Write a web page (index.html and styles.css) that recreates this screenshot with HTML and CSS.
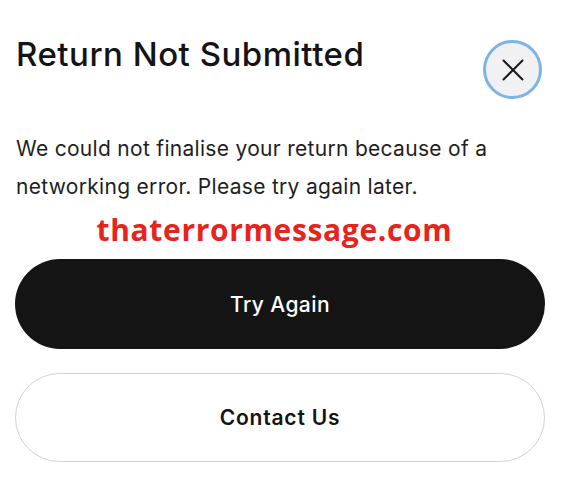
FILE: index.html
```html
<!DOCTYPE html>
<html lang="en">
<head>
<meta charset="utf-8">
<title>Return Not Submitted</title>
<link rel="stylesheet" href="styles.css">
</head>
<body>
<div class="dialog">
  <div class="header">
    <h1 class="title">Return Not Submitted</h1>
    <button class="close" aria-label="Close">
      <svg width="22" height="22" viewBox="0 0 22 22" aria-hidden="true">
        <path d="M1.5 1.5 L20.5 20.5 M20.5 1.5 L1.5 20.5" stroke="#1a1a1a" stroke-width="2" stroke-linecap="round" fill="none"/>
      </svg>
    </button>
  </div>
  <p class="message">We could not finalise your return because of a networking error. Please try again later.</p>
  <div class="watermark">thaterrormessage.com</div>
  <div class="actions">
    <button class="btn btn-primary">Try Again</button>
    <button class="btn btn-secondary">Contact Us</button>
  </div>
</div>
</body>
</html>
```

FILE: styles.css
```css
html, body {
  margin: 0;
  padding: 0;
  background: #ffffff;
}

body {
  font-family: "Inter", "Liberation Sans", Arial, sans-serif;
  color: #161616;
}

.dialog {
  width: 571px;
  box-sizing: border-box;
  padding: 34px 26px 0 15px;
}

.header {
  display: flex;
  justify-content: space-between;
  align-items: flex-start;
}

.title {
  margin: 0 0 0 1px;
  font-size: 33px;
  line-height: 40px;
  font-weight: 500;
  letter-spacing: 0.5px;
  color: #141414;
}

.close {
  margin: 6px 3px 0 0;
  width: 59px;
  height: 59px;
  box-sizing: border-box;
  border-radius: 50%;
  border: 3px solid #7db4e6;
  background: #f1f1f3;
  display: flex;
  align-items: center;
  justify-content: center;
  padding: 0;
}

.message {
  margin: 31px 0 0 1px;
  font-size: 21px;
  line-height: 38px;
  letter-spacing: 0.3px;
  color: #1e1e1e;
}

.watermark {
  margin-top: 6px;
  padding-right: 11px;
  text-align: center;
  font-family: "Open Sans", "Lato", sans-serif;
  font-weight: 700;
  font-size: 30px;
  line-height: 36px;
  letter-spacing: 0.65px;
  color: #e8231c;
}

.actions {
  margin-top: 11px;
  display: flex;
  flex-direction: column;
  gap: 24px;
}

.btn {
  height: 90px;
  border-radius: 45px;
  font-family: "Inter", "Liberation Sans", Arial, sans-serif;
  font-size: 21px;
  display: flex;
  align-items: center;
  justify-content: center;
  box-sizing: border-box;
  padding: 0;
}

.btn-primary {
  background: #141414;
  color: #ffffff;
  border: none;
  font-weight: 500;
  letter-spacing: 0.4px;
}

.btn-secondary {
  height: 89px;
  background: #ffffff;
  color: #141414;
  border: 1.5px solid #d2d2d2;
  font-weight: 600;
  letter-spacing: 0.8px;
}
```
